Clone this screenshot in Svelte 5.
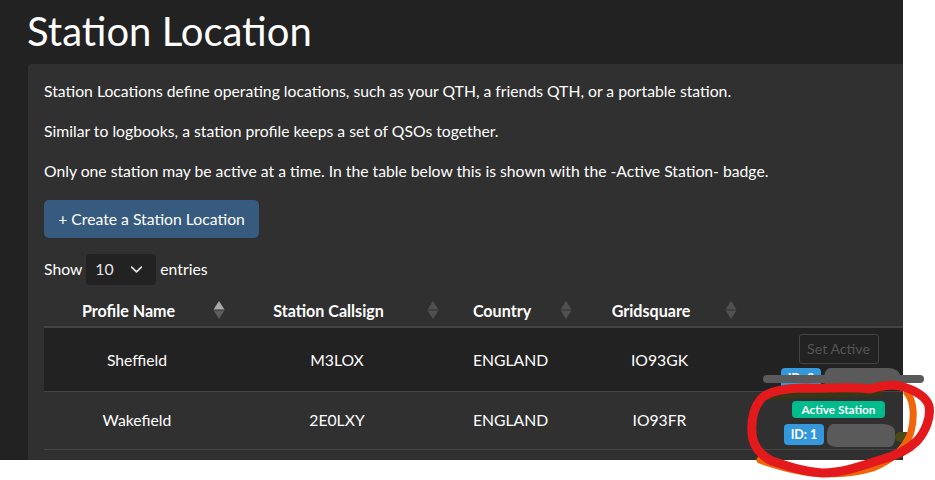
<script>
  const columns = [
    { label: 'Profile Name', width: 186, active: true },
    { label: 'Station Callsign', width: 214 },
    { label: 'Country', width: 133 },
    { label: 'Gridsquare', width: 165 },
    { label: '', width: 193 }
  ];
  const rows = [
    { name: 'Sheffield', call: 'M3LOX', country: 'ENGLAND', grid: 'IO93GK', id: 2, active: false },
    { name: 'Wakefield', call: '2E0LXY', country: 'ENGLAND', grid: 'IO93FR', id: 1, active: true }
  ];
</script>

<div class="stage">
  <main class="page">
    <h1>Station Location</h1>
    <section class="card">
      <p>Station Locations define operating locations, such as your QTH, a friends QTH, or a portable station.</p>
      <p>Similar to logbooks, a station profile keeps a set of QSOs together.</p>
      <p>Only one station may be active at a time. In the table below this is shown with the -Active Station- badge.</p>
      <button class="create">+ Create a Station Location</button>
      <div class="length">
        <span>Show</span>
        <span class="select">10
          <svg width="13" height="13" viewBox="0 0 16 16" fill="none" stroke="#e4e4e4" stroke-width="2" stroke-linecap="round" stroke-linejoin="round"><path d="M2 5l6 6 6-6" /></svg>
        </span>
        <span>entries</span>
      </div>
      <table>
        <colgroup>
          {#each columns as c}<col style="width:{c.width}px" />{/each}
        </colgroup>
        <thead>
          <tr>
            {#each columns as c}
              <th>
                <span class="label">{c.label}</span>
                {#if c.label}
                  <svg class="sort" width="12" height="18" viewBox="0 0 12 18">
                    <path d="M6 0l5.5 8.5h-11z" fill={c.active ? '#a8a8a8' : '#505050'} />
                    <path d="M6 18l5.5-8.5h-11z" fill={c.active ? '#5c5c5c' : '#505050'} />
                  </svg>
                {/if}
              </th>
            {/each}
          </tr>
        </thead>
        <tbody>
          {#each rows as r}
            <tr class:dark={!r.active}>
              <td>{r.name}</td>
              <td>{r.call}</td>
              <td>{r.country}</td>
              <td>{r.grid}</td>
              <td class="actions">
                {#if r.active}
                  <span class="badge green">Active Station</span>
                {:else}
                  <button class="set" disabled>Set Active</button>
                {/if}
                <div class="ids">
                  <span class="badge blue">ID: {r.id}</span><span class="redacted"></span>
                </div>
              </td>
            </tr>
          {/each}
        </tbody>
      </table>
    </section>
  </main>

  <svg class="scribble" width="935" height="480" viewBox="0 0 935 480" fill="none" stroke-linecap="round" stroke-linejoin="round">
    <path d="M767 379H920" stroke="#5a5a5a" stroke-width="8" />
    <path d="M770 397C800 394 840 395 880 393" stroke="#3a3a10" stroke-width="6" opacity=".8" />
    <path d="M900 437l6 0" stroke="#4a4a18" stroke-width="10" />
    <path d="M907 393C915 402 914 420 911 432C906 448 892 460 873 468C850 475 820 476 790 469C778 466 768 463 760 460" stroke="#f0640a" stroke-width="7" />
    <path d="M870 389C850 386 825 389 807 388C790 388 772 390 763 397C754 405 751 420 752 433C753 448 762 456 772 461C790 467 805 472 822 473C842 473 862 466 880 460C895 456 907 451 917 441C926 431 931 417 929 406C926 396 915 390 900 386C890 384 880 386 870 389" stroke="#e3191c" stroke-width="9" />
  </svg>
</div>

<style>
  :global(body) {
    margin: 0;
    background: #fff;
  }
  .stage {
    position: relative;
    width: 935px;
    height: 480px;
    overflow: hidden;
    font-family: Lato, "Liberation Sans", sans-serif;
  }
  .page {
    width: 903px;
    height: 460px;
    overflow: hidden;
    background: #222;
    padding-left: 28px;
    box-sizing: border-box;
    color: #fff;
  }
  h1 {
    margin: 0 0 0 -1px;
    padding-top: 9px;
    height: 64px;
    box-sizing: border-box;
    font-size: 40px;
    font-weight: 400;
    line-height: 45px;
    white-space: nowrap;
  }
  .card {
    width: 906px;
    height: 420px;
    box-sizing: border-box;
    background: #303030;
    border-radius: 4px;
    padding: 16px;
    font-size: 15.73px;
    line-height: 22.5px;
  }
  p {
    margin: 0 0 17.5px;
    white-space: nowrap;
  }
  .create {
    display: block;
    width: 215px;
    height: 38px;
    padding: 0;
    border: 0;
    border-radius: 5px;
    background: #375a7f;
    color: #fff;
    font: inherit;
  }
  .length {
    display: flex;
    align-items: center;
    gap: 4px;
    margin-top: 15px;
    height: 32px;
  }
  .select {
    display: flex;
    align-items: center;
    justify-content: space-between;
    box-sizing: border-box;
    width: 70px;
    height: 31px;
    padding: 0 13px 0 9px;
    background: #222;
    border-radius: 4px;
    color: #e4e4e4;
  }
  table {
    width: 890px;
    table-layout: fixed;
    border-collapse: collapse;
    margin-top: 8px;
    text-align: center;
  }
  th {
    position: relative;
    height: 34px;
    padding: 3px 17px 0 0;
    box-sizing: border-box;
    font-size: 16.1px;
    font-weight: 700;
    border-bottom: 2px solid #444;
    white-space: nowrap;
  }
  .sort {
    position: absolute;
    right: 5px;
    top: 8px;
  }
  td {
    height: 58px;
    padding: 1px 0 0;
    box-sizing: border-box;
    border-bottom: 1px solid #444;
  }
  tr.dark td {
    height: 64px;
    background: #222;
  }
  td.actions {
    line-height: 1;
    padding-top: 6px;
  }
  tr.dark td.actions {
    padding-top: 4px;
  }
  .set {
    display: inline-block;
    box-sizing: border-box;
    width: 80px;
    height: 30px;
    padding: 0;
    margin-bottom: 3px;
    background: transparent;
    border: 1px solid #444;
    border-radius: 3px;
    color: #555;
    font: 14.2px Lato, sans-serif;
  }
  .badge {
    display: inline-block;
    box-sizing: border-box;
    border-radius: 4px;
    color: #fff;
    font-weight: 700;
    font-size: 11.8px;
    line-height: 17px;
    height: 17px;
    padding: 0 9.5px;
  }
  .green {
    background: #00bc8c;
  }
  .blue {
    background: #3498db;
    height: 21px;
    line-height: 21px;
    width: 40px;
    padding: 0;
    font-size: 12.5px;
  }
  .ids {
    display: flex;
    justify-content: center;
    gap: 3px;
    margin-top: 6px;
    transform: translateX(1px);
  }
  .redacted {
    width: 68px;
    height: 23px;
    background: #5a5a5a;
    border-radius: 6px 12px 5px 10px / 10px 8px 9px 6px;
  }
  tr.dark .ids {
    margin-top: 1px;
    transform: translateX(2px);
  }
  tr.dark .redacted {
    width: 76px;
    height: 20px;
  }
  .scribble {
    position: absolute;
    inset: 0;
    pointer-events: none;
  }
</style>
